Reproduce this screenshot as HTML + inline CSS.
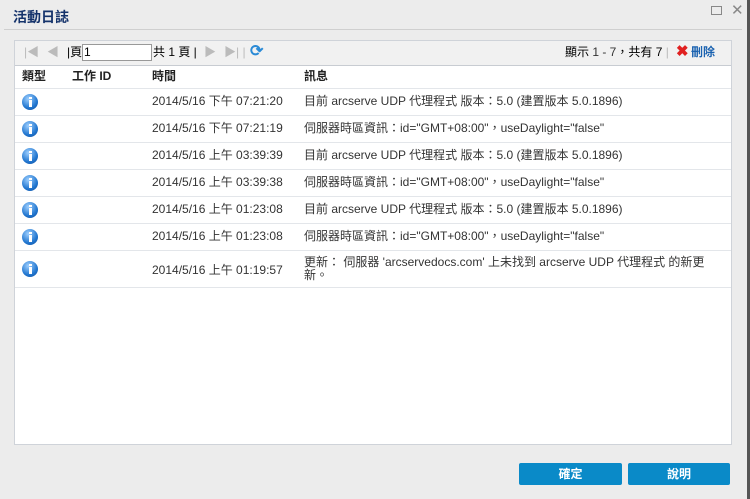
<!DOCTYPE html>
<html><head><meta charset="utf-8"><style>
*{margin:0;padding:0;box-sizing:border-box}
body{width:750px;height:499px;background:#ececec;font-family:"Liberation Sans","Noto Sans CJK TC",sans-serif;position:relative;overflow:hidden;color:#333;font-size:12px;line-height:14px}
.title{position:absolute;left:13px;top:9px;font-size:14px;line-height:16px;font-weight:bold;color:#15336b}
.sep{position:absolute;left:4px;top:29px;width:738px;height:1px;background:#cfcfcf}
.edge{position:absolute;left:747px;top:0;width:3px;height:499px;background:#555}
.panel{position:absolute;left:14px;top:40px;width:718px;height:405px;background:#fff;border:1px solid #cfd3d9}
.tb{position:absolute;left:0;top:0;width:716px;height:25px;background:#f1f1f1;border-bottom:1px solid #c8ccd2}
.row{position:absolute;left:0;width:716px;border-bottom:1px solid #e3e6ea}
.c{position:absolute;white-space:nowrap}
.ic{position:absolute;left:7px;width:16px;height:16px;border-radius:50%;background:radial-gradient(circle at 40% 30%,#9fd0ff,#2277d0 60%,#0d4a9a);}
.ic::after{content:"";position:absolute;left:7px;top:6px;width:2.5px;height:7px;background:#fff}
.ic::before{content:"";position:absolute;left:7px;top:2.5px;width:2.5px;height:2.5px;background:#fff}
.btn{position:absolute;top:463px;height:22px;background:#0a8ac8;border-radius:2px;color:#fff;font-weight:bold;text-align:center;line-height:22px;font-size:12px}
</style></head><body>
<div class="title">活動日誌</div>
<div class="c" style="left:711px;top:6px;width:11px;height:9px;border:1px solid #888"></div>
<div class="c" style="left:731px;top:3px;color:#888;font-size:15px;line-height:16px">✕</div>
<div class="sep"></div>
<div class="edge"></div>
<div class="panel">
 <div class="tb">
  <span class="c" style="left:9px;top:4px;color:#bbb">|◀</span>
  <span class="c" style="left:32px;top:4px;color:#bbb">◀</span>
  <span class="c" style="left:52px;top:4px;color:#000">|頁</span>
  <span class="c" style="left:67px;top:3px;width:70px;height:17px;background:#fff;border:1px solid #999;color:#000;padding-left:1px;line-height:15px">1</span>
  <span class="c" style="left:138px;top:4px;color:#000">共 1 頁 |</span>
  <span class="c" style="left:189px;top:4px;color:#bbb">▶</span>
  <span class="c" style="left:209px;top:4px;color:#bbb">▶| |</span>
  <span class="c" style="left:235px;top:2px;color:#2a8ad6;font-size:16px;line-height:18px;font-weight:bold">⟳</span>
  <span class="c" style="left:550px;top:4px;color:#000">顯示 <span style="color:#333">1 - 7</span>，共有 7 <span style="color:#bbb">|</span></span>
  <span class="c" style="left:661px;top:3px;color:#e02020;font-size:15px;line-height:16px;font-weight:bold">✖</span>
  <span class="c" style="left:676px;top:4px;color:#1a62b0;font-weight:bold">刪除</span>
 </div>
 <div class="row" style="top:25px;height:23px;font-weight:bold;color:#222">
  <span class="c" style="left:7px;top:3px">類型</span><span class="c" style="left:57px;top:3px">工作 ID</span><span class="c" style="left:137px;top:3px">時間</span><span class="c" style="left:289px;top:3px">訊息</span>
 </div>
 <div class="row" style="top:48px;height:27px"><div class="ic" style="top:5px"></div><span class="c" style="left:137px;top:5px">2014/5/16 下午 07:21:20</span><span class="c" style="left:289px;top:5px">目前 arcserve UDP 代理程式 版本：5.0 (建置版本 5.0.1896)</span></div>
 <div class="row" style="top:75px;height:27px"><div class="ic" style="top:5px"></div><span class="c" style="left:137px;top:5px">2014/5/16 下午 07:21:19</span><span class="c" style="left:289px;top:5px">伺服器時區資訊：id="GMT+08:00"，useDaylight="false"</span></div>
 <div class="row" style="top:102px;height:27px"><div class="ic" style="top:5px"></div><span class="c" style="left:137px;top:5px">2014/5/16 上午 03:39:39</span><span class="c" style="left:289px;top:5px">目前 arcserve UDP 代理程式 版本：5.0 (建置版本 5.0.1896)</span></div>
 <div class="row" style="top:129px;height:27px"><div class="ic" style="top:5px"></div><span class="c" style="left:137px;top:5px">2014/5/16 上午 03:39:38</span><span class="c" style="left:289px;top:5px">伺服器時區資訊：id="GMT+08:00"，useDaylight="false"</span></div>
 <div class="row" style="top:156px;height:27px"><div class="ic" style="top:5px"></div><span class="c" style="left:137px;top:5px">2014/5/16 上午 01:23:08</span><span class="c" style="left:289px;top:5px">目前 arcserve UDP 代理程式 版本：5.0 (建置版本 5.0.1896)</span></div>
 <div class="row" style="top:183px;height:27px"><div class="ic" style="top:5px"></div><span class="c" style="left:137px;top:5px">2014/5/16 上午 01:23:08</span><span class="c" style="left:289px;top:5px">伺服器時區資訊：id="GMT+08:00"，useDaylight="false"</span></div>
 <div class="row" style="top:210px;height:37px"><div class="ic" style="top:10px"></div><span class="c" style="left:137px;top:12px">2014/5/16 上午 01:19:57</span><span class="c" style="left:289px;top:5px;line-height:13px">更新： 伺服器 'arcservedocs.com' 上未找到 arcserve UDP 代理程式 的新更<br>新。</span></div>
</div>
<div class="btn" style="left:519px;width:103px">確定</div>
<div class="btn" style="left:628px;width:102px">說明</div>
</body></html>
